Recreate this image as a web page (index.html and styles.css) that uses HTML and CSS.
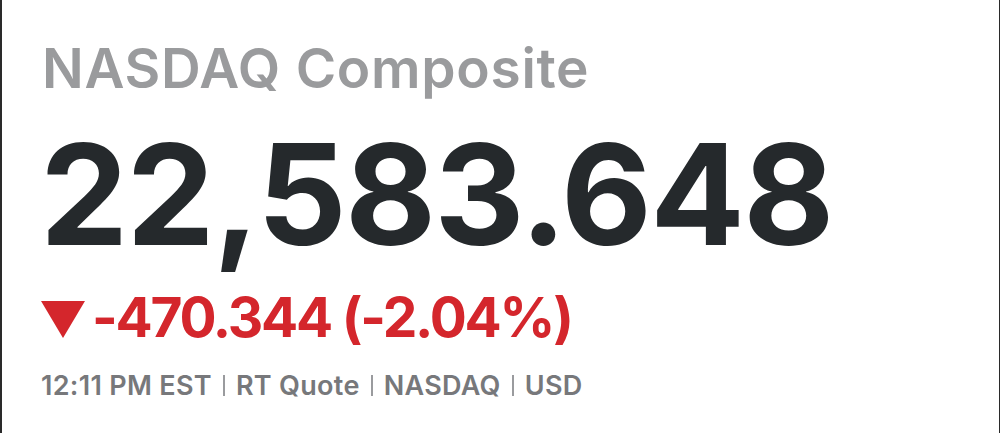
FILE: index.html
```html
<!DOCTYPE html>
<html>
<head>
<meta charset="utf-8">
<link rel="stylesheet" href="styles.css">
</head>
<body>
<div class="quote">
  <h1 class="name">NASDAQ Composite</h1>
  <div class="price">22,583.648</div>
  <div class="change">
    <svg class="arrow" width="44" height="37" viewBox="0 0 44 37"><polygon points="0,0 44,0 22,37" fill="#d4262c"/></svg>
    <span class="change-text">-470.344 (-2.04%)</span>
  </div>
  <div class="meta">12:11 PM EST<span class="sep"></span>RT Quote<span class="sep"></span>NASDAQ<span class="sep"></span>USD</div>
</div>
</body>
</html>
```
FILE: styles.css
```css
html, body {
  margin: 0;
  padding: 0;
  background: #fff;
}
.quote {
  box-sizing: border-box;
  width: 1000px;
  height: 433px;
  border-left: 2px solid #2a2a2a;
  border-right: 1px solid #2a2a2a;
  padding: 41px 0 0 42px;
  font-family: Inter, "Liberation Sans", sans-serif;
  display: flex;
  flex-direction: column;
  align-items: flex-start;
}
.name {
  margin: 0 0 0 -2px;
  font-size: 55px;
  line-height: 55px;
  font-weight: 600;
  letter-spacing: 0.7px;
  color: #9a9b9d;
}
.price {
  margin: 28px 0 0 -4px;
  font-size: 140px;
  line-height: 140px;
  font-weight: 700;
  letter-spacing: -1.7px;
  color: #25292c;
}
.change {
  margin-top: 25px;
  display: flex;
  align-items: center;
  gap: 7px;
  height: 56px;
  color: #d4262c;
}
.arrow {
  margin-left: -3px;
  margin-top: 4px;
}
.change-text {
  font-size: 55px;
  line-height: 56px;
  font-weight: 700;
  letter-spacing: -2.2px;
}
.meta {
  margin: 27px 0 0 -3px;
  font-size: 27px;
  line-height: 27px;
  font-weight: 600;
  letter-spacing: 0.3px;
  color: #77787b;
  display: flex;
  align-items: baseline;
}
.sep {
  display: inline-block;
  width: 2px;
  height: 21px;
  margin: 0 11px;
  position: relative;
  top: 1px;
  background: #9a9b9e;
}
```
